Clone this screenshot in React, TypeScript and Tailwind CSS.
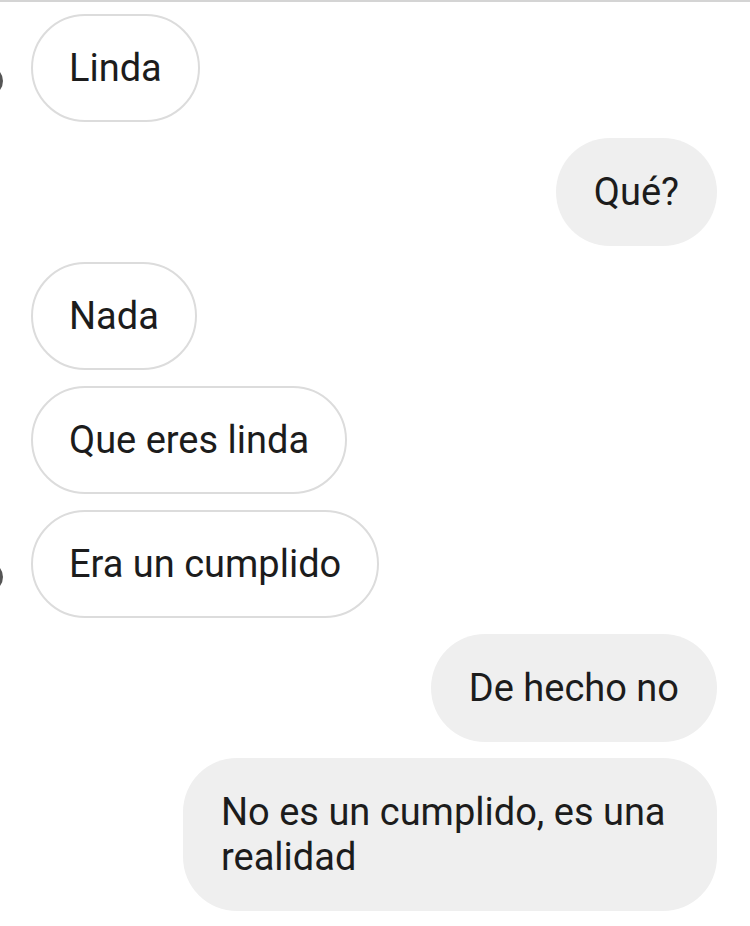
import React from "react";

type Msg = { text: string; me: boolean; avatar?: boolean };

const msgs: Msg[] = [
  { text: "Linda", me: false, avatar: true },
  { text: "Qué?", me: true },
  { text: "Nada", me: false },
  { text: "Que eres linda", me: false },
  { text: "Era un cumplido", me: false, avatar: true },
  { text: "De hecho no", me: true },
  { text: "No es un cumplido, es una realidad", me: true },
];

export default function App() {
  return (
    <div
      className="w-[750px] h-[926px] bg-white overflow-hidden text-[#1c1c1c]"
      style={{ fontFamily: "Roboto, 'Noto Sans', sans-serif" }}
    >
      <div className="h-[2px] bg-[#d4d4d4]" />
      <div className="flex flex-col gap-[16px] pt-[12px] pl-[31px] pr-[33px]">
        {msgs.map((m, i) => (
          <div
            key={i}
            className={`relative flex ${m.me ? "justify-end" : "justify-start"}`}
          >
            {m.avatar && (
              <div className="absolute left-[-58px] top-[52px] w-[30px] h-[30px] rounded-full bg-[#555555]" />
            )}
            {m.me ? (
              <div className="max-w-[534px] rounded-[54px] bg-[#efefef] px-[38px] py-[31.5px] text-[38px] leading-[45px]">
                {m.text}
              </div>
            ) : (
              <div className="max-w-[534px] rounded-[54px] border-2 border-[#dcdcdc] bg-white px-[36px] py-[29.5px] text-[38px] leading-[45px]">
                {m.text}
              </div>
            )}
          </div>
        ))}
      </div>
    </div>
  );
}
